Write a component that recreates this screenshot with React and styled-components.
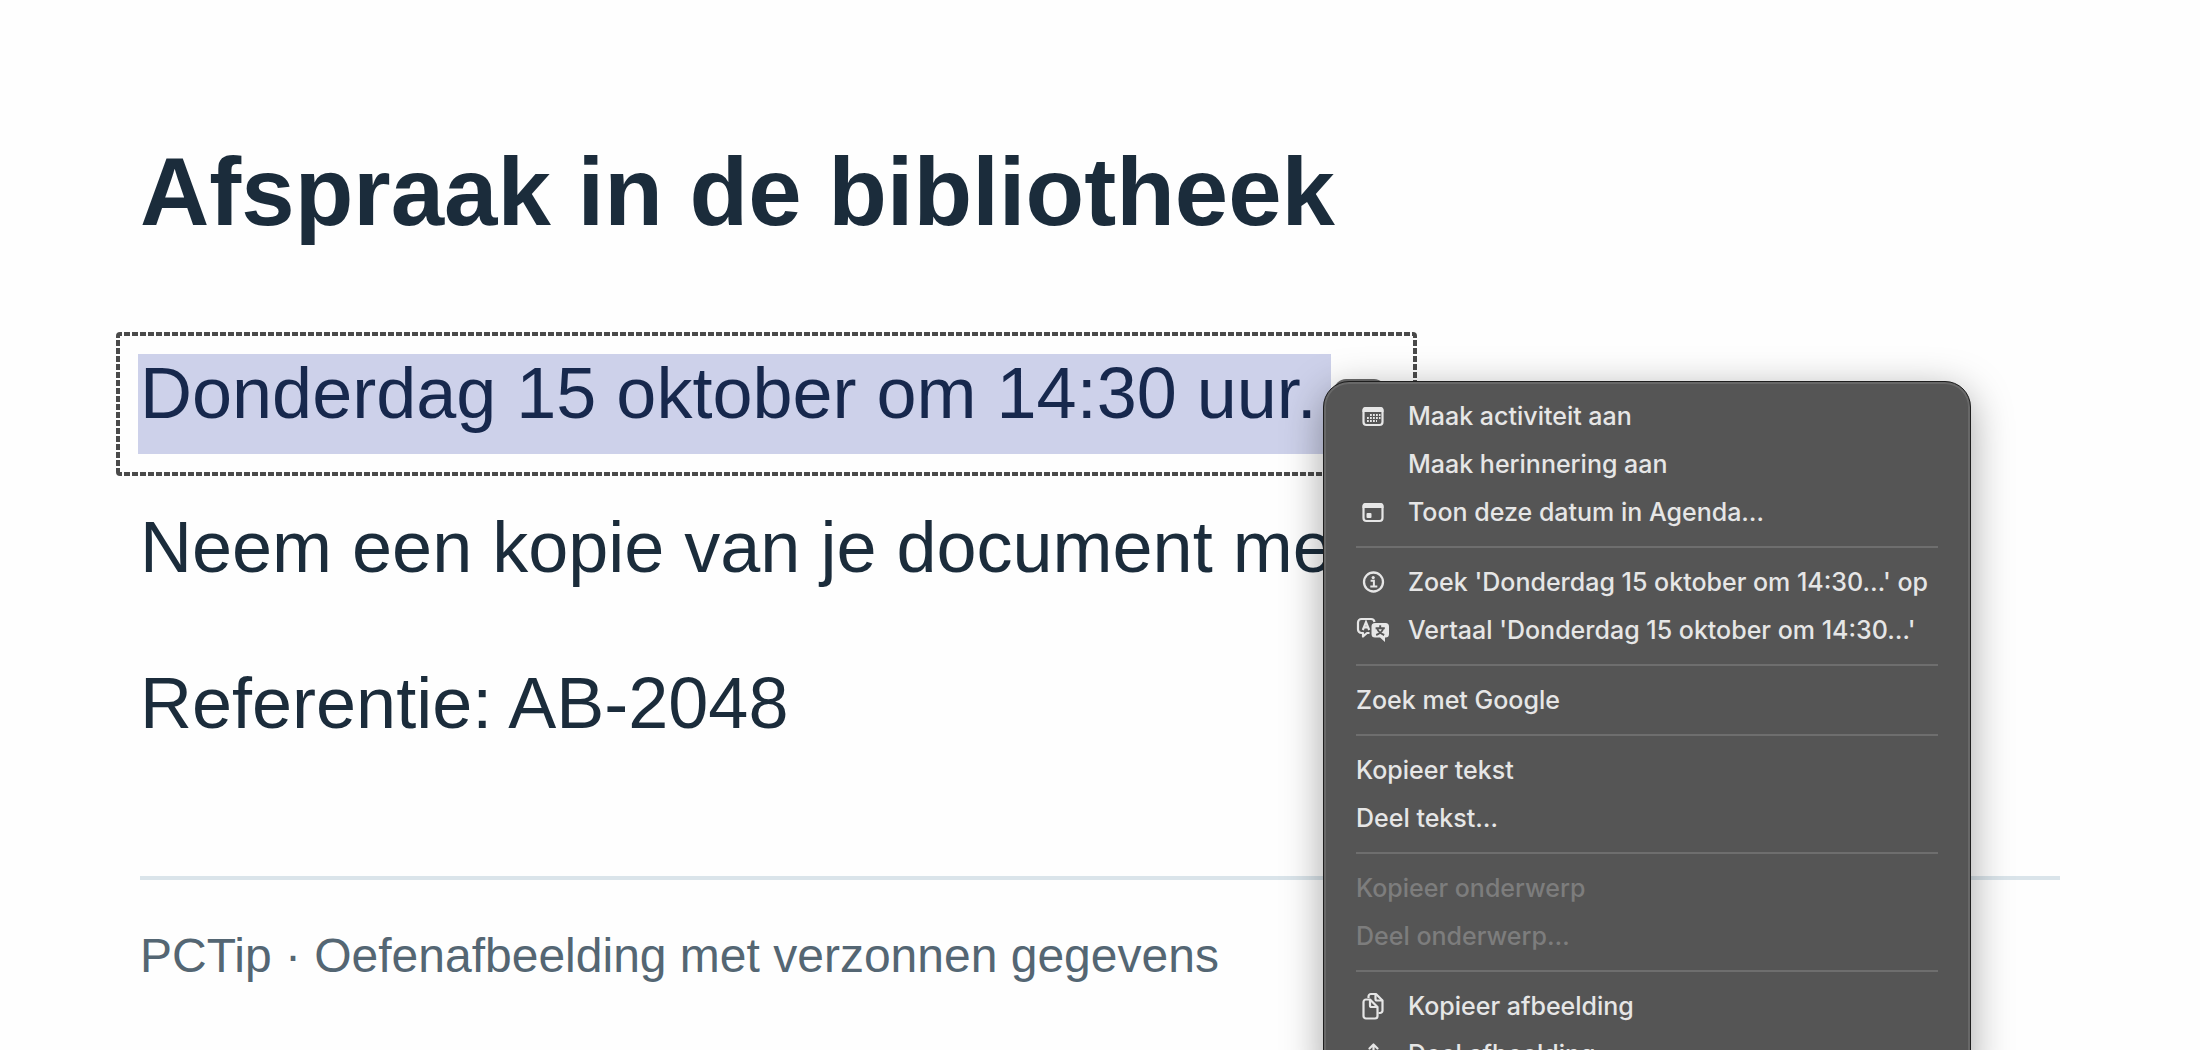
import React from 'react'
import styled, { createGlobalStyle } from 'styled-components';


const GlobalStyle = createGlobalStyle`
  * {
    box-sizing: border-box;
    margin: 0;
    padding: 0;
  }

  body {
    background-color: #fefefe;
    font-family: "Liberation Sans", Arial, sans-serif;
    color: #1b2c3b;
    overflow: hidden;
  }
`;

const ICON = '#e6e6e6'
const MENU = '#555555'

const CalendarGrid = () => (
  <svg width="34" height="28" viewBox="0 0 34 28" fill="none">
    <rect x="7.5" y="6" width="19" height="17" rx="3" stroke={ICON} strokeWidth="2.2" />
    <path d="M6.5 10V8a3 3 0 0 1 3-3h15a3 3 0 0 1 3 3v2z" fill={ICON} />
    <path d="M14 13h10.500M11 16h13.500M11 19h10" stroke={ICON} strokeWidth="1.8" strokeDasharray="1.8 1.2" />
  </svg>
)

const CalendarDay = () => (
  <svg width="34" height="28" viewBox="0 0 34 28" fill="none">
    <rect x="7.5" y="6" width="19" height="17" rx="3" stroke={ICON} strokeWidth="2.2" />
    <path d="M6.5 10V8a3 3 0 0 1 3-3h15a3 3 0 0 1 3 3v2z" fill={ICON} />
    <rect x="10.5" y="15" width="5" height="5" rx="1" fill={ICON} />
  </svg>
)

const Info = () => (
  <svg width="34" height="28" viewBox="0 0 34 28" fill="none" stroke={ICON}>
    <circle cx="17.5" cy="14" r="9.5" strokeWidth="2.3" />
    <circle cx="17.2" cy="9.6" r="1.6" fill={ICON} stroke="none" />
    <path d="M14.600 12.800h3.300v5.500M14.300 18.500h7" strokeWidth="2" />
  </svg>
)

const Translate = () => (
  <svg width="34" height="28" viewBox="0 0 34 28" fill="none">
    <path d="M13.500 17H11l-4 3.500V17H5.500A3.500 3.500 0 0 1 2 13.500v-7A3.500 3.500 0 0 1 5.500 3h9.500a3.500 3.500 0 0 1 3.500 3" stroke={ICON} strokeWidth="2.2" strokeLinejoin="round" />
    <path d="M6.800 14 10 6.200 13.200 14M8 11.400h4" stroke={ICON} strokeWidth="2.2" />
    <path d="M19 7h10.500a3.500 3.500 0 0 1 3.500 3.500V18a3.500 3.500 0 0 1-3.500 3.500H29V26l-5-4.500h-5a3.500 3.500 0 0 1-3.500-3.500v-7.500A3.500 3.500 0 0 1 19 7z" fill={ICON} />
    <path d="M24.200 9.300v3M19.600 12.300h9.200M27.200 12.500c-1 3-3.400 5.200-7 6.500M21.200 12.500c1 3 3.400 5.200 7 6.500" stroke={MENU} strokeWidth="1.9" />
  </svg>
)

const CopyDocs = () => (
  <svg width="34" height="28" viewBox="0 0 34 28" fill="none" stroke={ICON} strokeWidth="2.2" strokeLinejoin="round">
    <path d="M12.500 6V4.500A2.500 2.500 0 0 1 15 2h5l6.500 6.500v10A2.500 2.500 0 0 1 24 21h-1.500" />
    <path d="M19.500 2v5A1.500 1.500 0 0 0 21 8.500h5.500" />
    <path d="M10 7.500h4l7.500 7.500v9a2.500 2.500 0 0 1-2.500 2.500h-9A2.500 2.500 0 0 1 7.500 24V10A2.500 2.500 0 0 1 10 7.500z" />
    <path d="M14 7.500v6a1.500 1.500 0 0 0 1.500 1.500h6" />
  </svg>
)

const Share = () => (
  <svg width="34" height="28" viewBox="0 0 34 28" fill="none" stroke={ICON} strokeWidth="2.2" strokeLinecap="round" strokeLinejoin="round">
    <path d="M17.500 18V4.500M13.500 8.500l4-4 4 4M13 12h-3a1.500 1.500 0 0 0-1.500 1.500v11A1.500 1.500 0 0 0 10 26h15a1.500 1.500 0 0 0 1.500-1.500v-11A1.500 1.500 0 0 0 25 12h-3" />
  </svg>
)

const groups = [
  [
    { label: 'Maak activiteit aan', icon: <CalendarGrid /> },
    { label: 'Maak herinnering aan', indent: true },
    { label: 'Toon deze datum in Agenda…', icon: <CalendarDay /> },
  ],
  [
    { label: "Zoek 'Donderdag 15 oktober om 14:30…' op", icon: <Info /> },
    { label: "Vertaal 'Donderdag 15 oktober om 14:30…'", icon: <Translate /> },
  ],
  [{ label: 'Zoek met Google' }],
  [{ label: 'Kopieer tekst' }, { label: 'Deel tekst…' }],
  [
    { label: 'Kopieer onderwerp', disabled: true },
    { label: 'Deel onderwerp…', disabled: true },
  ],
  [
    { label: 'Kopieer afbeelding', icon: <CopyDocs /> },
    { label: 'Deel afbeelding…', icon: <Share /> },
  ],
]

const ContextMenu = () => {
  return (
    <Menu>
      {groups.map((group, index) => {
        return (
          <MenuGroup key={index}>
            {group.map((item) => (
              <MenuItem key={item.label} type="button" disabled={item.disabled}>
                {item.icon || item.indent ? <IconSlot>{item.icon}</IconSlot> : null}
                {item.label}
              </MenuItem>
            ))}
          </MenuGroup>
        )
      })}
    </Menu>
  )
}

const App = () => {
  return (
    <Page>
      <GlobalStyle />
      <Title>Afspraak in de bibliotheek</Title>
      <Selection>
        <Highlight>Donderdag 15 oktober om 14:30 uur.</Highlight>
      </Selection>
      <Line>Neem een kopie van je document mee.</Line>
      <Line>Referentie: AB-2048</Line>
      <Footer>PCTip · Oefenafbeelding met verzonnen gegevens</Footer>
      <Handle />
      <ContextMenu />
    </Page>
  )
}

const Page = styled.main`
  position: relative;
  height: 100vh;
  overflow: hidden;
  padding: 136px 140px 0;
`;

const Title = styled.h1`
  font-size: 96px;
  line-height: 112px;
  font-weight: 700;
  margin-bottom: 84px;
`;

const Line = styled.p`
  padding-bottom: 22px;
  margin-bottom: 56px;
  font-size: 72px;
  line-height: 78px;
  white-space: nowrap;
`;

/* marching ants around the selected line */
const Selection = styled.div`
  --ants: #4a4a4a 0 6px, transparent 6px 8px;
  width: fit-content;
  margin: 0 0 32px -24px;
  padding: 22px 86px 22px 22px;
  border-radius: 4px;
  background:
    repeating-linear-gradient(90deg, var(--ants)) top / 100% 4px no-repeat,
    repeating-linear-gradient(90deg, var(--ants)) bottom / 100% 4px no-repeat,
    repeating-linear-gradient(180deg, var(--ants)) left / 4px 100% no-repeat,
    repeating-linear-gradient(180deg, var(--ants)) right / 4px 100% no-repeat;
`;

const Highlight = styled(Line)`
  margin: 0;
  padding: 0 14px 22px 2px;
  color: #17284d;
  background-color: #cdd1ea;
`;

const Footer = styled.footer`
  margin-top: 112px;
  padding-top: 48px;
  border-top: 4px solid #dae4ea;
  font-size: 48px;
  line-height: 56px;
  color: #546673;
`;

/* edge of the small button that the menu covers */
const Handle = styled.div`
  position: absolute;
  left: 1334px;
  top: 379px;
  width: 52px;
  height: 24px;
  border-radius: 12px;
  background-color: #6b6b6b;
`;

const Menu = styled.div`
  position: absolute;
  left: 1323px;
  top: 381px;
  width: 648px;
  padding: 10px 32px;
  border: 1px solid #1e1e1e;
  border-radius: 26px;
  background-color: ${MENU};
  box-shadow: inset 0 0 0 2px #686868, 0 10px 40px rgba(0, 0, 0, 0.36);
  font-family: Inter, sans-serif;
`;

const MenuGroup = styled.div`
  & + & {
    margin-top: 10px;
    padding-top: 10px;
    border-top: 2px solid #6e6e6e;
  }
`;

const MenuItem = styled.button`
  display: flex;
  align-items: center;
  width: 100%;
  height: 48px;
  border: none;
  background: none;
  font-family: inherit;
  font-size: 25px;
  font-weight: 500;
  line-height: 48px;
  white-space: nowrap;
  color: #e6e6e6;

  &:disabled {
    color: #7d7d7d;
  }
`;

const IconSlot = styled.span`
  display: flex;
  width: 34px;
  margin-right: 18px;
`;

export default App
